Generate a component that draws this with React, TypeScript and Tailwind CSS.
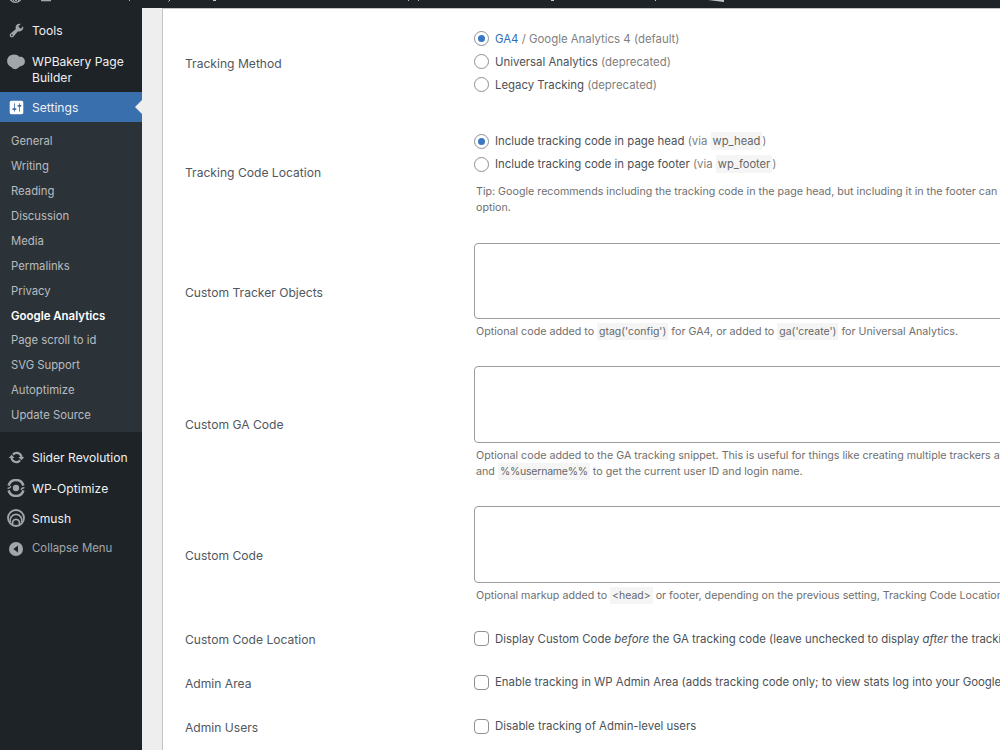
import React from "react";

const submenu = [
  "General",
  "Writing",
  "Reading",
  "Discussion",
  "Media",
  "Permalinks",
  "Privacy",
  "Google Analytics",
  "Page scroll to id",
  "SVG Support",
  "Autoptimize",
  "Update Source",
];

const WrenchIcon = () => (
  <svg viewBox="0 0 20 20" className="size-[17px]" fill="#a2a6ab">
    <path d="M16.68 9.77c-1.34 1.34-3.3 1.67-4.95.99l-5.41 6.52c-.99.99-2.59.99-3.58 0s-.99-2.59 0-3.57l6.52-5.42c-.68-1.65-.35-3.61.99-4.95 1.28-1.28 3.12-1.62 4.72-1.06l-2.89 2.89 2.82 2.82 2.86-2.87c.53 1.58.18 3.39-1.08 4.65zM3.81 16.21c.4.39 1.04.39 1.43 0 .4-.4.4-1.04 0-1.43-.39-.4-1.03-.4-1.43 0-.39.39-.39 1.03 0 1.43z" />
  </svg>
);

const BakeryIcon = () => (
  <svg viewBox="0 0 18 16" className="h-4 w-[18px]" fill="#a2a6ab">
    <path d="M7 .5c2.300 0 4 .8 5.200 2.300 3.300-.6 5.700 1.700 5.700 4.700 0 2.800-1.900 4.600-4.400 4.800-.9.1-1.400.6-2.100 1.400-1.300 1.400-3.300 1.800-5.100 1.100-.9-.4-1.300-1.400-2.100-1.900C1.600 12 .1 9.700.1 7.100.1 3.300 3.200.5 7 .5z" />
  </svg>
);

const SettingsIcon = () => (
  <svg viewBox="0 0 20 20" className="size-[17px]" fill="#fff">
    <path d="M18 16V4c0-1.100-.9-2-2-2H4c-1.100 0-2 .9-2 2v12c0 1.100.9 2 2 2h12c1.100 0 2-.9 2-2zM8 11h1c.55 0 1 .45 1 1s-.45 1-1 1H8v1.500c0 .28-.22.5-.5.5s-.5-.22-.5-.5V13H6c-.55 0-1-.45-1-1s.45-1 1-1h1V5.500c0-.28.22-.5.5-.5s.5.22.5.5V11zm5-2h-1c-.55 0-1-.45-1-1s.45-1 1-1h1V5.500c0-.28.22-.5.5-.5s.5.22.5.5V7h1c.55 0 1 .45 1 1s-.45 1-1 1h-1v5.500c0 .28-.22.5-.5.5s-.5-.22-.5-.5V9z" />
  </svg>
);

const SliderIcon = () => (
  <svg viewBox="0 0 20 20" className="size-[17px]" fill="#a2a6ab">
    <path d="M10.200 3.280c3.530 0 6.430 2.610 6.920 6h2.080l-3.500 4-3.500-4h2.320c-.45-1.970-2.210-3.450-4.320-3.450-1.450 0-2.730.71-3.540 1.780L4.950 5.660C6.230 4.200 8.110 3.280 10.200 3.280zm-.4 13.440c-3.520 0-6.430-2.610-6.920-6H.8l3.500-4c1.170 1.330 2.330 2.670 3.500 4H5.480c.45 1.970 2.210 3.450 4.320 3.450 1.450 0 2.730-.71 3.540-1.780l1.710 1.950c-1.280 1.460-3.150 2.380-5.250 2.380z" />
  </svg>
);

const OptimizeIcon = () => (
  <svg viewBox="0 0 18 18" className="size-[18px]" fill="none" stroke="#a2a6ab" strokeWidth="2.500">
    <circle cx="9" cy="9" r="3.200" fill="#a2a6ab" stroke="none" />
    <path d="M1.600 6.600a7.700 7.700 0 0 1 14.800 0" />
    <path d="M1.600 11.400a7.700 7.700 0 0 0 14.800 0" />
    <path d="M.6 9.200c1.700.2 2.700-.5 3.400-2M17.400 8.800c-1.700-.2-2.700.5-3.400 2" strokeWidth="1.500" />
  </svg>
);

const SmushIcon = () => (
  <svg viewBox="0 0 18 18" className="size-[18px]" fill="none" stroke="#a2a6ab" strokeWidth="1.800">
    <circle cx="9" cy="9" r="8" />
    <path d="M3.400 13.200a5.900 5.900 0 1 1 11.200 0" strokeWidth="1.700" />
    <path d="M5.900 15.500a3.500 3.500 0 1 1 6.200 0" strokeWidth="1.700" />
  </svg>
);

const CollapseIcon = () => (
  <svg viewBox="0 0 16 16" className="size-4">
    <circle cx="8" cy="8" r="7" fill="#a2a6ab" />
    <path d="M10 4.500v7L5.300 8z" fill="#1d2327" />
  </svg>
);

const MenuItem = ({ icon, children }: { icon: React.ReactNode; children: React.ReactNode }) => (
  <div className="flex h-[30.4px] items-center text-[12.1px] text-[#f0f0f1]">
    <div className="flex w-8 shrink-0 justify-center">{icon}</div>
    <span className="pt-[1.500px]">{children}</span>
  </div>
);

const Sidebar = () => (
  <aside className="w-[142px] shrink-0 bg-[#1d2327] pt-[7px]">
    <MenuItem icon={<WrenchIcon />}>Tools</MenuItem>
    <div className="flex h-[46.6px] text-[12.1px] leading-4 text-[#f0f0f1]">
      <div className="w-8 shrink-0 pl-[7px] pt-[8.600px]"><BakeryIcon /></div>
      <span className="pt-[8.600px]">WPBakery Page<br />Builder</span>
    </div>
    <div className="relative bg-[#3a6fae]">
      <MenuItem icon={<SettingsIcon />}>Settings</MenuItem>
      <div className="absolute right-0 top-[8px] border-y-[7px] border-r-[7px] border-y-transparent border-r-[#eee]" />
    </div>
    <ul className="h-[310px] bg-[#2c3338] pt-[6.600px] text-[11.3px] text-[#b9bcbf]">
      {submenu.map((name) => (
        <li key={name} className={name === "Google Analytics" ? "h-[24.950px] pl-[11px] text-[11.450px] font-semibold leading-[25px] text-white" : "h-[24.950px] pl-[11px] leading-[25px]"}>
          {name}
        </li>
      ))}
    </ul>
    <div className="pt-[10px]">
      <MenuItem icon={<SliderIcon />}>Slider Revolution</MenuItem>
      <MenuItem icon={<OptimizeIcon />}><span className="tracking-[0.1px]">WP-Optimize</span></MenuItem>
      <MenuItem icon={<SmushIcon />}>Smush</MenuItem>
      <div className="flex h-[30px] items-center text-[11.4px] text-[#a2a6ab]">
        <div className="flex w-8 justify-center"><CollapseIcon /></div>
        <span>Collapse Menu</span>
      </div>
    </div>
  </aside>
);

const Code = ({ children }: { children: React.ReactNode }) => (
  <code className="bg-[#f5f5f5] px-[2px] py-[2px] font-['Inter',sans-serif] text-[0.980em] text-[#666]">{children}</code>
);

const Muted = ({ children }: { children: React.ReactNode }) => <span className="text-[#808080]">{children}</span>;

const Radio = ({ checked, children }: { checked?: boolean; children: React.ReactNode }) => (
  <label className="flex h-[23.2px] items-center gap-[6px] whitespace-nowrap">
    <span className="flex size-[15px] items-center justify-center rounded-full border border-[#8c8f94] bg-white">
      {checked && <span className="size-[7px] rounded-full bg-[#3977c4]" />}
    </span>
    <span className="pt-[1.500px]">{children}</span>
  </label>
);

const Checkbox = ({ children }: { children: React.ReactNode }) => (
  <label className="flex h-[23px] items-center gap-[6px] whitespace-nowrap">
    <span className="size-[15px] rounded-[4px] border border-[#8c8f94] bg-white" />
    <span className="pt-[1.500px]">{children}</span>
  </label>
);

const Description = ({ children }: { children: React.ReactNode }) => (
  <p className="whitespace-nowrap pl-[2px] text-[10.7px] leading-4 text-[#6f6f6f]">{children}</p>
);

const TextArea = ({ className }: { className: string }) => (
  <div className={`${className} w-[600px] rounded-[4px] border border-[#9a9c9f] bg-white`} />
);

const Row = ({ label, className, children }: { label: string; className: string; children: React.ReactNode }) => (
  <div className="flex">
    <div className="flex w-[289px] shrink-0 items-center pt-px text-[12.1px] text-[#50575e]">{label}</div>
    <div className={className}>{children}</div>
  </div>
);

const AdminBar = () => (
  <header className="h-2 overflow-hidden bg-[#1d2327]">
    <svg width="1000" height="8" fill="none">
      <circle cx="15.500" cy="-4" r="6.300" stroke="#a2a6ab" strokeWidth="1.300" />
      <path d="M13 0l1.500 1.500L16 0l1.500 1.500L19 0" stroke="#a2a6ab" />
      <path d="M41 0h10v1.300H41z" fill="#a2a6ab" />
      <path d="M129 0l1 .8M170 0l-1.500 1.500M213 .5h3M408 0l1 .8M419 0l-1 .8M551 .5h3M655 0l1 1" stroke="#c9cbcd" />
      <path d="M708 0h16v2z" fill="#c3c4c7" />
    </svg>
  </header>
);

const App = () => {
  return (
    <div className="h-[750px] w-[1000px] overflow-hidden bg-[#eee] font-['Inter',sans-serif]">
      <AdminBar />
      <div className="flex h-[742px]">
        <Sidebar />
        <main className="ml-5 min-w-0 flex-1 overflow-hidden border-l border-t border-[#c3c4c7] bg-white pl-[22px] pt-[2px] text-[11.4px] text-[#4b5157]">
          <Row label="Tracking Method" className="h-[105px] pt-[16px]">
            <Radio checked><span className="text-[#2f6db8]">GA4</span> <Muted>/ Google Analytics 4 (default)</Muted></Radio>
            <Radio>Universal Analytics <Muted>(deprecated)</Muted></Radio>
            <Radio>Legacy Tracking <Muted>(deprecated)</Muted></Radio>
          </Row>
          <Row label="Tracking Code Location" className="h-[114px] pt-[13.500px]">
            <Radio checked>Include tracking code in page head <Muted>(via <Code>wp_head</Code>)</Muted></Radio>
            <Radio>Include tracking code in page footer <Muted>(via <Code>wp_footer</Code>)</Muted></Radio>
            <div className="pt-[8.600px]">
              <Description>
                Tip: Google recommends including the tracking code in the page head, but including it in the footer can benefit page performance.
                <br />option.
              </Description>
            </div>
          </Row>
          <Row label="Custom Tracker Objects" className="h-[126px] pt-[13px]">
            <TextArea className="h-[76px]" />
            <div className="pt-[5px]">
              <Description>Optional code added to <Code>gtag('config')</Code> for GA4, or added to <Code>ga('create')</Code> for Universal Analytics.</Description>
            </div>
          </Row>
          <Row label="Custom GA Code" className="h-[138px] pt-[10px]">
            <TextArea className="h-[77px]" />
            <div className="pt-[5px]">
              <Description>
                Optional code added to the GA tracking snippet. This is useful for things like creating multiple trackers and
                <br />and <Code><span className="tracking-[-0.200px]">%%username%%</span></Code> to get the current user ID and login name.
              </Description>
            </div>
          </Row>
          <Row label="Custom Code" className="h-[124px] pt-[12px]">
            <TextArea className="h-[77px]" />
            <div className="pt-[5px]">
              <Description>Optional markup added to <Code>&lt;head&gt;</Code> or footer, depending on the previous setting, Tracking Code Location.</Description>
            </div>
          </Row>
          <Row label="Custom Code Location" className="h-11 pt-[9px]">
            <Checkbox>Display Custom Code <em>before</em> the GA tracking code (leave unchecked to display <em>after</em> the tracking code)</Checkbox>
          </Row>
          <Row label="Admin Area" className="h-[43.500px] pt-[8.500px]">
            <Checkbox>Enable tracking in WP Admin Area (adds tracking code only; to view stats log into your Google account)</Checkbox>
          </Row>
          <Row label="Admin Users" className="h-[43.500px] pt-[9px]">
            <Checkbox>Disable tracking of Admin-level users</Checkbox>
          </Row>
        </main>
      </div>
    </div>
  );
};

export default App;
